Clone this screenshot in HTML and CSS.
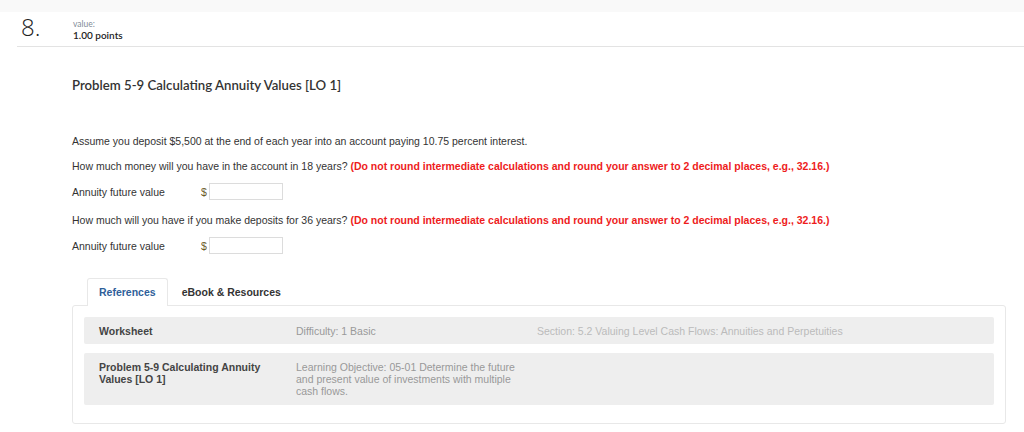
FILE: index.html
```html
<!DOCTYPE html>
<html>
<head>
<meta charset="utf-8">
<link rel="stylesheet" href="styles.css">
</head>
<body>
<div class="topband"></div>
<div class="qhead">
  <div class="qnum">8.</div>
  <div class="qval">
    <div class="vlabel">value:</div>
    <div class="vpts">1.00 points</div>
  </div>
</div>
<div class="main">
  <h1 class="title">Problem 5-9 Calculating Annuity Values [LO 1]</h1>
  <p class="para p1">Assume you deposit $5,500 at the end of each year into an account paying 10.75 percent interest.</p>
  <p class="para">How much money will you have in the account in 18 years? <span class="warn">(Do not round intermediate calculations and round your answer to 2 decimal places, e.g., 32.16.)</span></p>
  <div class="ans">
    <span class="alabel">Annuity future value</span>
    <span class="dollar">$</span>
    <span class="box"></span>
  </div>
  <p class="para">How much will you have if you make deposits for 36 years? <span class="warn">(Do not round intermediate calculations and round your answer to 2 decimal places, e.g., 32.16.)</span></p>
  <div class="ans">
    <span class="alabel">Annuity future value</span>
    <span class="dollar">$</span>
    <span class="box"></span>
  </div>
  <div class="tabs">
    <div class="tab active">References</div>
    <div class="tab">eBook &amp; Resources</div>
  </div>
  <div class="panel">
    <div class="row">
      <div class="c1">Worksheet</div>
      <div class="c2">Difficulty: 1 Basic</div>
      <div class="c3">Section: 5.2 Valuing Level Cash Flows: Annuities and Perpetuities</div>
    </div>
    <div class="row tall">
      <div class="c1">Problem 5-9 Calculating Annuity Values [LO 1]</div>
      <div class="c2">Learning Objective: 05-01 Determine the future and present value of investments with multiple cash flows.</div>
      <div class="c3"></div>
    </div>
  </div>
</div>
</body>
</html>
```

FILE: styles.css
```css
html, body {
  margin: 0;
  padding: 0;
  background: #ffffff;
}
body {
  font-family: "Liberation Sans", Arial, sans-serif;
  color: #333333;
}
.topband {
  height: 12px;
  background: #f9f9f9;
}
.qhead {
  display: flex;
  margin-left: 17px;
  height: 34px;
  border-bottom: 1px solid #e3e3e3;
}
.qnum {
  width: 56px;
  padding-left: 4px;
  box-sizing: border-box;
  font-family: "Open Sans", sans-serif;
  font-weight: 300;
  font-size: 24px;
  line-height: 28px;
  padding-top: 1px;
  color: #222222;
}
.qval {
  padding-top: 8px;
  font-family: "Lato", sans-serif;
}
.vlabel {
  font-size: 8.5px;
  line-height: 9px;
  color: #7f8b98;
}
.vpts {
  font-size: 10px;
  line-height: 12px;
  font-weight: 600;
  color: #222222;
}
.main {
  padding-left: 72px;
  padding-right: 18px;
}
.title {
  margin: 30px 0 0 0;
  font-family: "Lato", sans-serif;
  font-weight: 600;
  font-size: 13.2px;
  line-height: 16px;
  color: #333333;
}
.para {
  margin: 0;
  font-size: 10.5px;
  line-height: 12px;
  height: 12px;
  color: #333333;
  margin-top: 13px;
}
.p1 {
  margin-top: 42px;
}
.warn {
  color: #ee1c1c;
  font-weight: bold;
}
.ans {
  display: flex;
  align-items: center;
  height: 17px;
  margin-top: 11px;
  font-size: 10.5px;
}
.alabel {
  width: 129px;
}
.dollar {
  width: 8px;
  color: #6b5a2a;
}
.box {
  width: 74px;
  height: 17px;
  border: 1px solid #dcdcdc;
  box-sizing: border-box;
  background: #fff;
}
.ans + .para {
  margin-top: 14px;
}
.tabs {
  display: flex;
  margin-top: 24px;
  padding-left: 15px;
  height: 28px;
  position: relative;
  z-index: 1;
}
.tab {
  font-size: 10.5px;
  font-weight: bold;
  color: #333333;
  padding: 0 13px;
  line-height: 27px;
  border: 1px solid transparent;
  border-bottom: none;
}
.tab.active {
  color: #2f5f9a;
  background: #fff;
  border-color: #e8e8e8;
  border-radius: 3px 3px 0 0;
  padding: 0 11px;
  height: 28px;
  box-sizing: border-box;
}
.panel {
  margin-top: -1px;
  border: 1px solid #e8e8e8;
  border-radius: 3px;
  padding: 11px 11px 18px 11px;
  display: flex;
  flex-direction: column;
  gap: 9px;
}
.row {
  display: flex;
  background: #eeeeee;
  border-radius: 2px;
  min-height: 27px;
  align-items: center;
  font-size: 10.5px;
  line-height: 12px;
}
.row.tall {
  align-items: flex-start;
  padding: 8px 0 8px 0;
  min-height: 0;
}
.c1 {
  width: 212px;
  padding-left: 15px;
  box-sizing: border-box;
  padding-right: 28px;
  font-weight: bold;
  color: #444444;
  flex: none;
}
.c2 {
  width: 241px;
  padding-right: 18px;
  box-sizing: border-box;
  color: #999999;
  flex: none;
}
.c3 {
  color: #bbbbbb;
}
```
